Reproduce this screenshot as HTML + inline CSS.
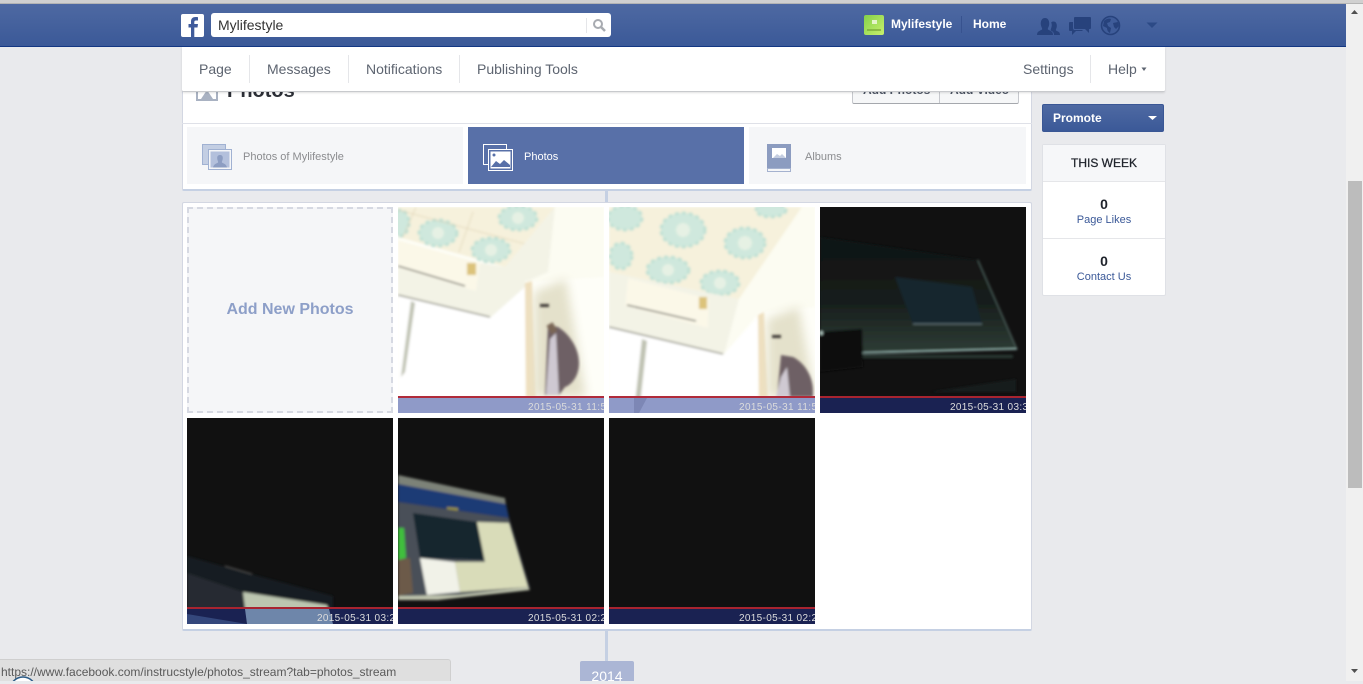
<!DOCTYPE html>
<html><head><meta charset="utf-8"><title>Photos</title>
<style>
*{box-sizing:border-box}
html,body{margin:0;padding:0;width:1363px;height:681px;overflow:hidden;background:#e9eaed;font-family:"Liberation Sans",sans-serif}
.a{position:absolute}
.t{position:absolute;white-space:nowrap;line-height:16px}
.nav{font-size:14px;color:#5d6470;top:61px}
.sep{position:absolute;width:1px;background:#e5e6e9}
svg{position:absolute;display:block;overflow:hidden}
svg text{font-family:"Liberation Sans",sans-serif;font-size:10px;fill:#dcdcdc}
</style></head><body>

<div class="a" style="left:0;top:0;width:1363px;height:4px;background:#d0d0d0;border-bottom:1px solid #b4b4b4"></div>

<!-- timeline -->
<div class="a" style="left:605px;top:188px;width:3px;height:480px;background:#c5d0e3"></div>

<!-- heading card -->
<div class="a" style="left:182px;top:80px;width:850px;height:111px;background:#fff;border:1px solid #d3d7e2;border-bottom:2px solid #c5d0e3;border-radius:2px"></div>
<div class="a" style="left:182px;top:123px;width:850px;height:1px;background:#dfe1e8"></div>
<svg style="left:194px;top:81px" width="26" height="22"><rect x="3" y="8" width="20" height="11" fill="none" stroke="#a9b2c2" stroke-width="2"/><path d="M7 18l6-9 6 9z" fill="#a9b2c2"/></svg>
<div class="t" style="left:227px;top:80px;font-size:20px;font-weight:bold;color:#2c2f36;line-height:22px">Photos</div>
<div class="a" style="left:852px;top:70px;width:167px;height:34px;background:#f6f7f8;border:1px solid #c6c8cd;border-bottom-color:#a5a8ad;border-radius:2px"></div>
<div class="a" style="left:939px;top:70px;width:1px;height:33px;background:#c6c8cd"></div>
<div class="t" style="left:863px;top:82px;font-size:12px;font-weight:bold;color:#4e5665">Add Photos</div>
<div class="t" style="left:950px;top:82px;font-size:12px;font-weight:bold;color:#4e5665">Add Video</div>

<!-- tabs -->
<div class="a" style="left:187px;top:127px;width:276px;height:57px;background:#f5f6f8"></div>
<div class="a" style="left:468px;top:127px;width:276px;height:57px;background:#5870a8"></div>
<div class="a" style="left:749px;top:127px;width:277px;height:57px;background:#f5f6f8"></div>

<svg style="left:201px;top:143px" width="33" height="29">
<rect x="1.500" y="1.500" width="23" height="20" fill="#c3cee3" stroke="#a0b1d2"/>
<rect x="7.500" y="6.500" width="23" height="20" fill="#f5f6f8" stroke="#a0b1d2"/>
<rect x="9.500" y="8.500" width="19" height="16" fill="#b3c0dc"/>
<path d="M12 24.500c1-4 4-4 5-5 .5-1-.8-2-.8-4.500 0-2 1-3 2.800-3s2.800 1 2.800 3c0 2.500-1.300 3.500-.8 4.500 1 1 4 1 5 5z" fill="#8c9dc2"/>
</svg>
<div class="t" style="left:243px;top:149px;font-size:11px;color:#8b8c8f">Photos of Mylifestyle</div>

<svg style="left:482px;top:143px" width="33" height="29">
<rect x="1.500" y="1.500" width="23" height="20" fill="#5870a8" stroke="#fff"/>
<rect x="6.500" y="6.500" width="24" height="21" fill="#5870a8" stroke="#fff"/>
<rect x="8.500" y="8.500" width="20" height="17" fill="#fff"/>
<circle cx="12" cy="12" r="1.500" fill="#5870a8"/>
<path d="M9 24l5-6 4 3 4-4 6 5v2z" fill="#5870a8"/>
</svg>
<div class="t" style="left:524px;top:149px;font-size:11px;color:#fff">Photos</div>

<svg style="left:766px;top:143px" width="26" height="30">
<rect x="1" y="1" width="24" height="25" fill="#8c9cc0"/>
<rect x="1.500" y="25.500" width="23" height="3" fill="#f5f6f8" stroke="#a5b2cf"/>
<rect x="6" y="5" width="14" height="10" fill="#fff"/>
<path d="M7 15l4-4 3 2 2-2 4 4z" fill="#c4cde0"/>
</svg>
<div class="t" style="left:805px;top:149px;font-size:11px;color:#8b8c8f">Albums</div>

<!-- photo card -->
<div class="a" style="left:182px;top:202px;width:850px;height:429px;background:#fff;border:1px solid #d3d7e2;border-bottom:2px solid #c5d0e3;border-radius:2px"></div>
<div class="a" style="left:187px;top:207px;width:206px;height:206px;background:#f5f6f8;border:2px dashed #d6d9e2"></div>
<div class="t" style="left:187px;top:301px;width:206px;text-align:center;font-size:16px;font-weight:bold;color:#8d9fc8;line-height:18px">Add New Photos</div>

<!-- photo 1 -->
<svg style="left:398px;top:207px" width="206" height="206" viewBox="0 0 206 206">
<defs><filter id="b" x="-5%" y="-5%" width="110%" height="110%"><feGaussianBlur stdDeviation="1.200"/></filter>
<filter id="b2" x="-30%" y="-30%" width="160%" height="160%"><feGaussianBlur stdDeviation="5"/></filter>
<filter id="tb" x="-5%" y="-20%" width="110%" height="140%"><feGaussianBlur stdDeviation="0.300"/></filter></defs>
<rect width="206" height="206" fill="#fefef8"/>
<g filter="url(#b)">
<polygon points="0,0 157,0 107,60 0,30" fill="#f6f1dc"/>
<g fill="#cfe8dd" stroke="#bfe0d4" stroke-width="3" stroke-dasharray="4 3"><ellipse cx="40" cy="26" rx="19" ry="13"/><ellipse cx="93" cy="43" rx="19" ry="12"/><ellipse cx="120" cy="11" rx="19" ry="12"/><ellipse cx="2" cy="16" rx="9" ry="13"/></g>
<g fill="#e6f1e4"><circle cx="40" cy="26" r="6"/><circle cx="93" cy="43" r="6"/><circle cx="120" cy="11" r="6"/></g>
<path d="M18 0L5 30M75 5l-14 40M0 3l150 40" stroke="#d8c9a8" stroke-width=".8" fill="none" opacity=".7"/>
<polygon points="107,60 82,56 78,84 0,61 0,89 92,111 127,80 127,74 150,70 157,0" fill="#f3f3e6"/>
<polygon points="127,75 150,65 157,0 206,0 206,70" fill="#fcfcf2"/>
<polygon points="0,33 82,56 78,84 0,61" fill="#fbf8e8"/>
<line x1="0" y1="59" x2="67" y2="79" stroke="#60605a" stroke-width="1.300"/>
<rect x="69" y="56" width="9" height="12" fill="#dcc37a"/>
<polygon points="0,89 92,111 127,80 127,190 0,190" fill="#fff"/>
<line x1="0" y1="88" x2="92" y2="110" stroke="#85857a" stroke-width="1.300"/>
<polygon points="13,94 17,96 7,165 3,170" fill="#bfc2b2"/>
<polygon points="127,76 134,74 138,190 128,190" fill="#efdfbe"/>
</g>
<g filter="url(#b2)"><polygon points="136,85 168,72 188,190 136,190" fill="#e4e1cb"/></g>
<g filter="url(#b)">
<rect x="142" y="97" width="9" height="3" fill="#3a3630"/>
<path d="M150 118l10 2c10 6 21 20 21 36 0 14-8 22-14 24l-6 8h-14z" fill="#6e6065"/>
<path d="M152 132l6-6 3 62h-13z" fill="#cfc9d2"/>
<rect x="151" y="116" width="7" height="10" fill="#7a6656" transform="rotate(-30 155 122)"/>
</g>
<rect y="189" width="206" height="2" fill="#b02a3a"/>
<rect y="191" width="206" height="15" fill="#8f9ac8"/>
<text filter="url(#tb)" x="130" y="203" textLength="78">2015-05-31 11:5</text>
</svg>

<!-- photo 2 -->
<svg style="left:609px;top:207px" width="206" height="206" viewBox="0 0 206 206">
<rect width="206" height="206" fill="#fefef8"/>
<g filter="url(#b)">
<polygon points="0,0 193,0 130,92 100,86 0,65" fill="#f6f1dc"/>
<g fill="#cfe8dd" stroke="#bfe0d4" stroke-width="3" stroke-dasharray="4 3"><ellipse cx="16" cy="11" rx="17" ry="12"/><ellipse cx="74" cy="23" rx="22" ry="17"/><ellipse cx="136" cy="36" rx="20" ry="15"/><ellipse cx="162" cy="3" rx="15" ry="7"/><ellipse cx="12" cy="49" rx="11" ry="13"/><ellipse cx="59" cy="63" rx="21" ry="13"/><ellipse cx="111" cy="76" rx="19" ry="12"/></g>
<g fill="#e6f1e4"><circle cx="74" cy="23" r="7"/><circle cx="136" cy="36" r="7"/><circle cx="59" cy="63" r="6"/><circle cx="111" cy="76" r="6"/></g>
<polygon points="0,65 130,92 115,148 0,121" fill="#f3f3e6"/>
<polygon points="19,71 100,92 99,121 16,99" fill="#fbf8e8"/>
<line x1="18" y1="98" x2="87" y2="114" stroke="#60605a" stroke-width="1.300"/>
<rect x="90" y="90" width="8" height="12" fill="#dcc37a"/>
<polygon points="130,92 193,0 206,0 206,100 150,105 115,148" fill="#fcfcf2"/>
<polygon points="0,121 114,148 149,110 149,190 0,190" fill="#fff"/>
<line x1="0" y1="120" x2="114" y2="147" stroke="#85857a" stroke-width="1.300"/>
<polygon points="33,132 38,134 30,206 25,206" fill="#bfc2b2"/>
<polygon points="149,108 155,105 159,190 150,190" fill="#efdfbe"/>
</g>
<g filter="url(#b2)"><polygon points="158,112 190,100 206,190 158,190" fill="#e4e1cb"/></g>
<g filter="url(#b)">
<rect x="163" y="128" width="9" height="3" fill="#3a3630"/>
<path d="M172 148l12 2c12 6 20 20 20 34v6h-36z" fill="#6e6065"/>
<path d="M172 170l6-10 3 30h-14z" fill="#cfc9d2"/>
</g>
<rect y="189" width="206" height="2" fill="#b02a3a"/>
<rect y="191" width="206" height="15" fill="#8f9ac8"/>
<polygon points="25,191 38,191 30,206 25,206" fill="#7d87b5"/>
<text filter="url(#tb)" x="130" y="203" textLength="78">2015-05-31 11:5</text>
</svg>

<!-- photo 3 -->
<svg style="left:820px;top:207px" width="206" height="206" viewBox="0 0 206 206">
<defs><linearGradient id="sc" x1="0" y1="0" x2="0" y2="1"><stop offset="0" stop-color="#0f1212"/><stop offset=".55" stop-color="#161d1b"/><stop offset="1" stop-color="#2e3c35"/></linearGradient></defs>
<rect width="206" height="206" fill="#111"/>
<g filter="url(#b)">
<polygon points="0,30 158,53 197,142 43,145 42,122 0,125" fill="url(#sc)"/>
<polygon points="75,70 152,80 162,117 93,117" fill="#12262f"/>
<line x1="93" y1="117" x2="162" y2="117" stroke="#7f949a" stroke-width=".8"/>
<line x1="158" y1="53" x2="197" y2="142" stroke="#5f7872" stroke-width=".8"/>
<polygon points="0,125 42,122 43,160 0,165" fill="#0a0a0a"/>
<line x1="43" y1="146" x2="197" y2="142" stroke="#a9cfc8" stroke-width="1.300"/>
<rect x="43" y="148" width="150" height="3" fill="#2c3a36"/>
<circle cx="1" cy="126" r="2" fill="#b0c8c0"/>
<polygon points="110,185 196,172 196,185" fill="#191d1c"/>
</g>
<rect y="189" width="206" height="2" fill="#a82430"/>
<rect y="191" width="206" height="15" fill="#1a2252"/>
<text filter="url(#tb)" x="130" y="203" textLength="78">2015-05-31 03:3</text>
</svg>

<!-- photo 4 -->
<svg style="left:187px;top:418px" width="206" height="206" viewBox="0 0 206 206">
<rect width="206" height="206" fill="#111"/>
<g filter="url(#b)">
<polygon points="0,138 60,155 146,178 146,206 0,206" fill="#171b20"/>
<polygon points="0,155 56,174 60,206 0,206" fill="#262c33"/>
<line x1="38" y1="148" x2="65" y2="156" stroke="#555" stroke-width="1"/>
<polygon points="56,174 140,187 146,206 60,206" fill="#bcc6b0"/>
</g>
<rect y="189" width="206" height="2" fill="#a82430"/>
<rect y="191" width="206" height="15" fill="#1a2252"/>
<polygon points="0,196 60,206 0,206" fill="#34477c"/>
<polygon points="58,191 142,191 146,206 60,206" fill="#6e86aa"/>
<text filter="url(#tb)" x="130" y="203" textLength="78">2015-05-31 03:2</text>
</svg>

<!-- photo 5 -->
<svg style="left:398px;top:418px" width="206" height="206" viewBox="0 0 206 206">
<rect width="206" height="206" fill="#111"/>
<g filter="url(#b)">
<polygon points="0,57 107,80 108,88 0,66" fill="#7d8278"/>
<polygon points="0,66 108,86 111,100 0,84" fill="#1c3a74"/>
<polygon points="49,89 60,90 60,95 49,94" fill="#9a9240"/>
<polygon points="0,84 111,100 132,170 42,179 0,179" fill="#4a5058"/>
<polygon points="15,95 79,104 87,142 22,140" fill="#18262f"/>
<polygon points="79,104 111,105 130,169 62,174 57,144 87,144" fill="#d9dcb9"/>
<polygon points="22,140 57,144 62,174 29,177" fill="#f1f2e8"/>
<polygon points="0,110 6,110 8,140 0,142" fill="#3fbf3c"/>
<polygon points="0,142 12,140 15,175 0,178" fill="#6c5a48"/>
<polygon points="0,178 60,177 130,169 132,172 40,182 0,182" fill="#bfc4ae"/>
</g>
<rect y="189" width="206" height="2" fill="#a82430"/>
<rect y="191" width="206" height="15" fill="#1a2252"/>
<text filter="url(#tb)" x="130" y="203" textLength="78">2015-05-31 02:2</text>
</svg>

<!-- photo 6 -->
<svg style="left:609px;top:418px" width="206" height="206" viewBox="0 0 206 206">
<rect width="206" height="206" fill="#111"/>
<rect y="189" width="206" height="2" fill="#a82430"/>
<rect y="191" width="206" height="15" fill="#1a2252"/>
<text filter="url(#tb)" x="130" y="203" textLength="78">2015-05-31 02:2</text>
</svg>

<!-- sidebar -->
<div class="a" style="left:1042px;top:104px;width:122px;height:28px;background:linear-gradient(#4e69a2,#3b5998);border:1px solid #3a5795;border-radius:2px"></div>
<div class="t" style="left:1053px;top:110px;font-size:12px;font-weight:bold;color:#fff">Promote</div>
<svg style="left:1147px;top:115px" width="12" height="6"><path d="M1 1h9l-4.500 4z" fill="#fff"/></svg>

<div class="a" style="left:1042px;top:144px;width:124px;height:152px;background:#fff;border:1px solid #dfe1e6;border-radius:2px"></div>
<div class="a" style="left:1043px;top:145px;width:122px;height:37px;background:#f6f7f9;border-bottom:1px solid #e5e6e9"></div>
<div class="t" style="left:1043px;top:155px;width:122px;text-align:center;font-size:12px;color:#20242c;-webkit-text-stroke:.25px #20242c">THIS WEEK</div>
<div class="a" style="left:1043px;top:238px;width:122px;height:1px;background:#e5e6e9"></div>
<div class="t" style="left:1043px;top:196px;width:122px;text-align:center;font-size:14px;font-weight:bold;color:#20242c">0</div>
<div class="t" style="left:1043px;top:212px;width:122px;text-align:center;font-size:11px;color:#3b5998">Page Likes</div>
<div class="t" style="left:1043px;top:253px;width:122px;text-align:center;font-size:14px;font-weight:bold;color:#20242c">0</div>
<div class="t" style="left:1043px;top:269px;width:122px;text-align:center;font-size:11px;color:#3b5998">Contact Us</div>

<!-- nav -->
<div class="a" style="left:182px;top:47px;width:983px;height:45px;background:#fff;border-bottom:1px solid #c8cacd;box-shadow:0 1px 2px rgba(0,0,0,.12);border-radius:0 0 2px 2px"></div>
<div class="t nav" style="left:199px">Page</div>
<div class="sep" style="left:249px;top:55px;height:28px"></div>
<div class="t nav" style="left:267px">Messages</div>
<div class="sep" style="left:348px;top:55px;height:28px"></div>
<div class="t nav" style="left:366px">Notifications</div>
<div class="sep" style="left:459px;top:55px;height:28px"></div>
<div class="t nav" style="left:477px">Publishing Tools</div>
<div class="t nav" style="left:1023px">Settings</div>
<div class="sep" style="left:1090px;top:55px;height:28px"></div>
<div class="t nav" style="left:1108px">Help</div>
<svg style="left:1141px;top:67px" width="6" height="5"><path d="M0.500 0.500h5l-2.500 3.500z" fill="#5d6470"/></svg>

<!-- top bar -->
<div class="a" style="left:0;top:4px;width:1346px;height:43px;background:linear-gradient(#4e69a2,#3b5998);border-bottom:1px solid #133783"></div>
<div class="a" style="left:181px;top:14px;width:23px;height:23px;background:#fff;border-radius:2px;overflow:hidden"></div>
<svg style="left:181px;top:14px" width="23" height="23"><path d="M10 23V13.500H7.500V10H10V7.500C10 4.500 11.800 3 14.500 3c1 0 2 .1 2.500 .2V6.500h-2c-1.300 0-1.700 .6-1.700 1.700V10H17l-.5 3.500h-3.200V23z" fill="#3f5b9b"/></svg>
<div class="a" style="left:211px;top:13px;width:400px;height:24px;background:#fff;border-radius:3px"></div>
<div class="a" style="left:586px;top:18px;width:1px;height:15px;background:#e5e6e9"></div>
<div class="t" style="left:218px;top:17px;font-size:14px;color:#333">Mylifestyle</div>
<svg style="left:592px;top:18px" width="15" height="15"><circle cx="6" cy="6" r="4" fill="none" stroke="#a8abb1" stroke-width="2"/><path d="M9 9l4 4" stroke="#a8abb1" stroke-width="2.500"/></svg>

<svg style="left:864px;top:15px" width="20" height="20"><defs><linearGradient id="g" x1="0" y1="0" x2="1" y2="1"><stop offset="0" stop-color="#84d04a"/><stop offset="1" stop-color="#c8f06c"/></linearGradient></defs><rect width="20" height="20" rx="2" fill="url(#g)"/><rect x="8" y="5" width="5" height="4" fill="#e4f4c8"/><rect x="3" y="14" width="14" height="2" fill="#6f9e30" opacity=".6"/></svg>
<div class="t" style="left:891px;top:16px;font-size:12px;font-weight:bold;color:#fff">Mylifestyle</div>
<div class="a" style="left:961px;top:16px;width:1px;height:17px;background:#37528f"></div>
<div class="t" style="left:973px;top:16px;font-size:12px;font-weight:bold;color:#fff">Home</div>

<svg style="left:1036px;top:15px" width="24" height="21"><path d="M1 20c0-4 3-4 5-5.500.7-1-.9-2.500-1.200-5C4.500 6 5.800 3 9 3s4.500 3 4.200 6.500c-.3 2.500-1.900 4-1.200 5 2 1.500 5 1.500 5 5.500z" fill="#27427c"/><path d="M18 20h6c0-3.500-2.500-3.500-4-4.500-.5-1 .6-2 .8-4 .2-2.500-.7-5-3.300-5-1 0-1.800.3-2.300 1 .5 1 .6 2 .5 3.500-.2 2-1.200 3.500-1 4.500 2 .8 3.500 2 3.300 4.500z" fill="#27427c"/></svg>
<svg style="left:1068px;top:15px" width="24" height="22"><path d="M7 2h15a1 1 0 0 1 1 1v10a1 1 0 0 1-1 1h-1v4l-4-4H7a1 1 0 0 1-1-1V3a1 1 0 0 1 1-1z" fill="#27427c"/><path d="M5 7H2a1 1 0 0 0-1 1v7a1 1 0 0 0 1 1h2v4l4-4h7l-1-1H6a2 2 0 0 1-1-2z" fill="#27427c"/></svg>
<svg style="left:1100px;top:15px" width="21" height="21"><circle cx="10.500" cy="10.500" r="9" fill="#3f5c99" stroke="#27427c" stroke-width="1.600"/><path d="M4 6c2-2 5-3 7-2l-1 3-3 1 1 3 3 2-1 5c-2-1-3-3-3-5L3 11zM13 8l5-1 1 4-3 3-2-2z" fill="#27427c"/></svg>
<svg style="left:1146px;top:22px" width="12" height="7"><path d="M0.500 0.500h11l-5.500 5.500z" fill="#2c4a86"/></svg>

<!-- year + status -->
<div class="a" style="left:580px;top:661px;width:54px;height:20px;background:#abb6d5;border-radius:2px 2px 0 0"></div>
<div class="t" style="left:580px;top:668px;width:54px;text-align:center;font-size:14px;color:#fff">2014</div>

<div class="a" style="left:0;top:659px;width:451px;height:22px;background:#dfdfdf;border:1px solid #cfcfcf;border-left:0;border-bottom:0;border-radius:0 3px 0 0"></div>
<div class="t" style="left:1px;top:664px;font-size:12px;color:#5a5a5a">https://www.facebook.com/instrucstyle/photos_stream?tab=photos_stream</div>
<svg style="left:8px;top:675px" width="30" height="6"><circle cx="15" cy="15" r="13" fill="#fff" stroke="#2c5c88" stroke-width="1.500"/></svg>

<!-- scrollbar -->
<div class="a" style="left:1346px;top:4px;width:17px;height:677px;background:#f0f0f0"></div>
<div class="a" style="left:1348px;top:181px;width:14px;height:307px;background:#bcbcbc"></div>
<svg style="left:1350px;top:9px" width="9" height="6"><path d="M4.500 1l3.500 4H1z" fill="#505050"/></svg>
<svg style="left:1350px;top:668px" width="9" height="6"><path d="M1 1h7L4.500 5z" fill="#505050"/></svg>
</body></html>
